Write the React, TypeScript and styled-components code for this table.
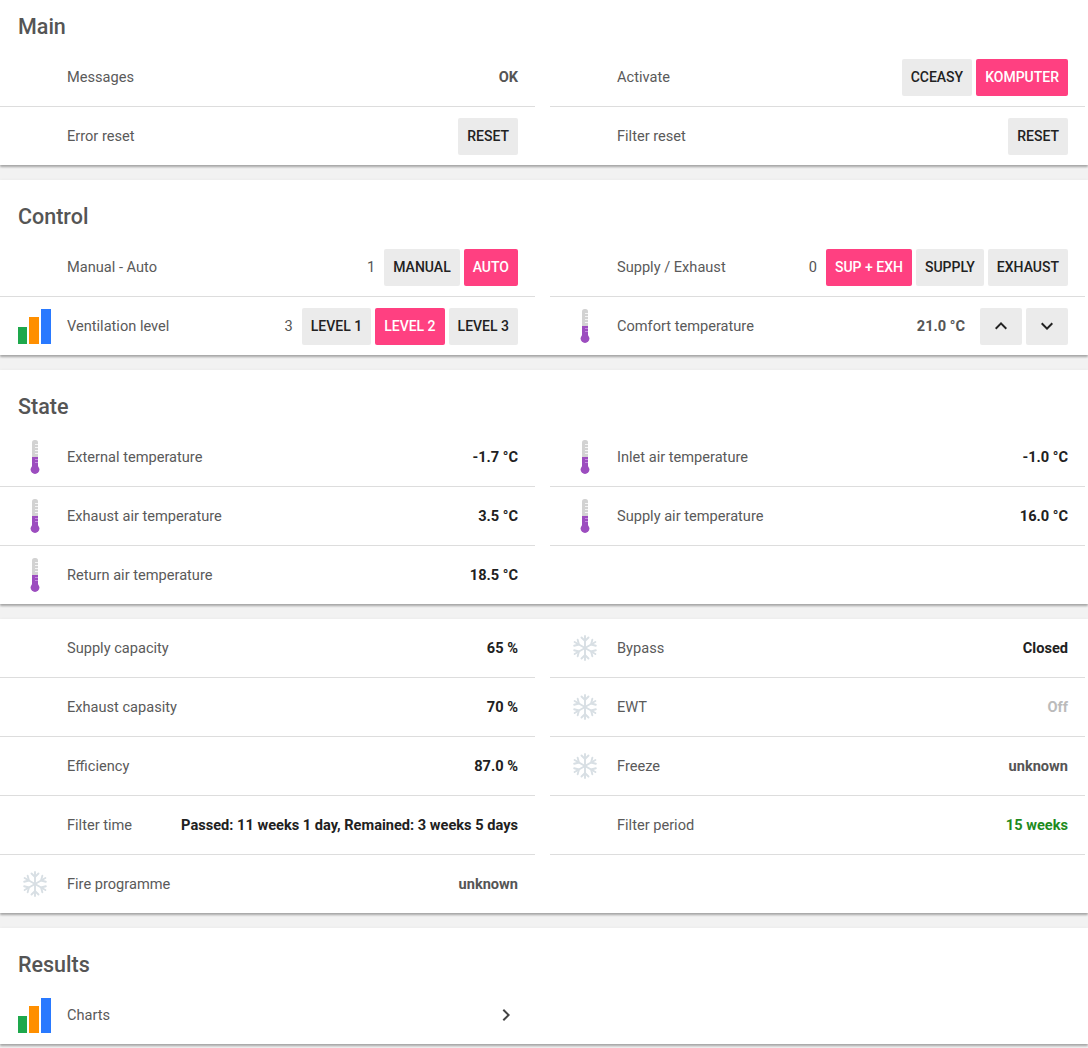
import React from "react";
import styled, { createGlobalStyle } from "styled-components";

const GlobalStyle = createGlobalStyle`
  html, body {
    margin: 0;
    padding: 0;
    background: #f2f2f2;
    font-family: Roboto, "Noto Sans", sans-serif;
    -webkit-font-smoothing: antialiased;
  }
`;

// 카드 목록, 위로 살짝 스크롤 된 상태
const Page = styled.div`
  display: flex;
  flex-direction: column;
  gap: 15px;
  margin-top: -10px;
  padding-bottom: 4px;
`;

const Card = styled.section`
  background: white;
  box-shadow: 0 2px 2px rgba(0, 0, 0, 0.28), 0 1px 4px rgba(0, 0, 0, 0.08);
`;

const Heading = styled.div`
  height: 58px;
  box-sizing: border-box;
  padding: 23px 0 0 18px;
  font-size: 21.5px;
  line-height: 28px;
  font-weight: 500;
  color: #555;
`;

const Columns = styled.div`
  display: grid;
  grid-template-columns: 1fr 1fr;
  column-gap: 15px;
  padding-right: 3px;
`;

const Column = styled.div`
  display: flex;
  flex-direction: column;
`;

const Row = styled.div<{ $divider: boolean }>`
  height: 58px;
  display: flex;
  align-items: center;
  padding: 0 17px 0 15px;
  border-bottom: ${(p) => (p.$divider ? "1px solid #ddd" : "none")};
`;

const IconSlot = styled.div`
  width: 40px;
  height: 40px;
  flex: none;
  display: flex;
  align-items: center;
  justify-content: center;
`;

const Label = styled.div`
  margin-left: 12px;
  font-size: 14.6px;
  color: #5a5a5a;
  white-space: nowrap;
`;

const Spacer = styled.div`
  flex-grow: 1;
`;

const Value = styled.div<{ $tone?: string; $gap?: number }>`
  font-size: 14.6px;
  font-weight: 700;
  white-space: nowrap;
  margin-right: ${(p) => p.$gap ?? 0}px;
  color: ${(p) =>
    p.$tone === "muted"
      ? "#555"
      : p.$tone === "off"
      ? "#bbb"
      : p.$tone === "good"
      ? "#1e8b1e"
      : "#212121"};
`;

const Count = styled.div`
  font-size: 14.6px;
  color: #555;
  margin-right: 9px;
`;

const Buttons = styled.div`
  display: flex;
  gap: 4px;
`;

const Button = styled.button<{ $active?: boolean }>`
  height: 37px;
  min-width: 40px;
  padding: 0 9px;
  border: none;
  border-radius: 2px;
  font-family: Roboto, sans-serif;
  font-size: 14px;
  font-weight: 500;
  text-transform: uppercase;
  display: flex;
  align-items: center;
  justify-content: center;
  background: ${(p) => (p.$active ? "#ff4081" : "#ebebeb")};
  color: ${(p) => (p.$active ? "white" : "#222")};
  cursor: pointer;
`;

const Chevron = styled.div`
  width: 24px;
  height: 24px;
  display: flex;
`;

const BarsIcon = () => (
  <svg width="34" height="35" viewBox="0 0 34 35">
    <rect x="0" y="18" width="9" height="17" fill="#1ea84c" />
    <rect x="11" y="8" width="10" height="27" fill="#ff8f00" />
    <rect x="23" y="0" width="10" height="35" fill="#2979ff" />
  </svg>
);

const ThermoIcon = () => (
  <svg width="12" height="34" viewBox="0 0 12 34">
    <rect x="3" y="0" width="6" height="28" rx="2.5" fill="#d2d2d2" />
    <rect x="3" y="17" width="6" height="11" fill="#9c4dbf" />
    <circle cx="6" cy="29.5" r="4.4" fill="#9c4dbf" />
    {[4, 7, 10, 13].map((y) => (
      <rect key={y} x="6" y={y} width="3" height="1" fill="#f4f4f4" />
    ))}
    {[19, 22].map((y) => (
      <rect key={y} x="6" y={y} width="3" height="1" fill="#c58be0" />
    ))}
  </svg>
);

const SnowIcon = () => (
  <svg width="28" height="28" viewBox="0 0 28 28">
    <g stroke="#d8dfe4" strokeWidth="1.9" strokeLinecap="round" fill="none">
      {[0, 60, 120].map((a) => (
        <line key={a} x1="14" y1="2" x2="14" y2="26" transform={`rotate(${a} 14 14)`} />
      ))}
      {[0, 60, 120, 180, 240, 300].map((a) => (
        <polyline
          key={a}
          points="10.5,3.5 14,7 17.5,3.5"
          transform={`rotate(${a} 14 14)`}
        />
      ))}
    </g>
  </svg>
);

const ChevronRight = () => (
  <svg width="24" height="24" viewBox="0 0 24 24">
    <path d="M8.6 16.6L13.2 12 8.6 7.4 10 6l6 6-6 6z" fill="#444" />
  </svg>
);

const ChevronUp = () => (
  <svg width="24" height="24" viewBox="0 0 24 24">
    <path d="M7.4 15.4L12 10.8l4.6 4.6L18 14l-6-6-6 6z" fill="#222" />
  </svg>
);

const ChevronDown = () => (
  <svg width="24" height="24" viewBox="0 0 24 24">
    <path d="M7.4 8.6L12 13.2l4.6-4.6L18 10l-6 6-6-6z" fill="#222" />
  </svg>
);

type Item = {
  label: string;
  icon?: "bars" | "thermo" | "snow";
  right: React.ReactNode;
};

const iconFor = (icon?: Item["icon"]) => {
  if (icon === "bars") return <BarsIcon />;
  if (icon === "thermo") return <ThermoIcon />;
  if (icon === "snow") return <SnowIcon />;
  return null;
};

const Entities = ({ left, right }: { left: Item[]; right: Item[] }) => {
  const rows = Math.max(left.length, right.length);
  const renderCol = (items: Item[]) => (
    <Column>
      {items.map((it, i) => (
        <Row key={it.label} $divider={i < rows - 1}>
          <IconSlot>{iconFor(it.icon)}</IconSlot>
          <Label>{it.label}</Label>
          <Spacer />
          {it.right}
        </Row>
      ))}
    </Column>
  );
  return (
    <Columns>
      {renderCol(left)}
      {renderCol(right)}
    </Columns>
  );
};

const Choice = ({
  count,
  options,
  active,
}: {
  count?: string;
  options: string[];
  active?: string;
}) => (
  <>
    {count && <Count>{count}</Count>}
    <Buttons>
      {options.map((o) => (
        <Button key={o} $active={o === active}>
          {o}
        </Button>
      ))}
    </Buttons>
  </>
);

const App = () => {
  return (
    <>
      <GlobalStyle />
      <Page>
        <Card>
          <Heading>Main</Heading>
          <Entities
            left={[
              { label: "Messages", right: <Value $tone="muted">OK</Value> },
              { label: "Error reset", right: <Choice options={["Reset"]} /> },
            ]}
            right={[
              {
                label: "Activate",
                right: <Choice options={["CCEasy", "Komputer"]} active="Komputer" />,
              },
              { label: "Filter reset", right: <Choice options={["Reset"]} /> },
            ]}
          />
        </Card>

        <Card>
          <Heading>Control</Heading>
          <Entities
            left={[
              {
                label: "Manual - Auto",
                right: <Choice count="1" options={["Manual", "Auto"]} active="Auto" />,
              },
              {
                label: "Ventilation level",
                icon: "bars",
                right: (
                  <Choice
                    count="3"
                    options={["Level 1", "Level 2", "Level 3"]}
                    active="Level 2"
                  />
                ),
              },
            ]}
            right={[
              {
                label: "Supply / Exhaust",
                right: (
                  <Choice
                    count="0"
                    options={["Sup + Exh", "Supply", "Exhaust"]}
                    active="Sup + Exh"
                  />
                ),
              },
              {
                label: "Comfort temperature",
                icon: "thermo",
                right: (
                  <>
                    <Value $tone="muted" $gap={15}>
                      21.0 °C
                    </Value>
                    <Buttons>
                      <Button>
                        <Chevron>
                          <ChevronUp />
                        </Chevron>
                      </Button>
                      <Button>
                        <Chevron>
                          <ChevronDown />
                        </Chevron>
                      </Button>
                    </Buttons>
                  </>
                ),
              },
            ]}
          />
        </Card>

        <Card>
          <Heading>State</Heading>
          <Entities
            left={[
              { label: "External temperature", icon: "thermo", right: <Value>-1.7 °C</Value> },
              { label: "Exhaust air temperature", icon: "thermo", right: <Value>3.5 °C</Value> },
              { label: "Return air temperature", icon: "thermo", right: <Value>18.5 °C</Value> },
            ]}
            right={[
              { label: "Inlet air temperature", icon: "thermo", right: <Value>-1.0 °C</Value> },
              { label: "Supply air temperature", icon: "thermo", right: <Value>16.0 °C</Value> },
            ]}
          />
        </Card>

        <Card>
          <Entities
            left={[
              { label: "Supply capacity", right: <Value>65 %</Value> },
              { label: "Exhaust capasity", right: <Value>70 %</Value> },
              { label: "Efficiency", right: <Value>87.0 %</Value> },
              {
                label: "Filter time",
                right: <Value>Passed: 11 weeks 1 day, Remained: 3 weeks 5 days</Value>,
              },
              {
                label: "Fire programme",
                icon: "snow",
                right: <Value $tone="muted">unknown</Value>,
              },
            ]}
            right={[
              { label: "Bypass", icon: "snow", right: <Value>Closed</Value> },
              { label: "EWT", icon: "snow", right: <Value $tone="off">Off</Value> },
              { label: "Freeze", icon: "snow", right: <Value $tone="muted">unknown</Value> },
              { label: "Filter period", right: <Value $tone="good">15 weeks</Value> },
            ]}
          />
        </Card>

        <Card>
          <Heading>Results</Heading>
          <Entities
            left={[{ label: "Charts", icon: "bars", right: <ChevronRight /> }]}
            right={[]}
          />
        </Card>
      </Page>
    </>
  );
};

export default App;
